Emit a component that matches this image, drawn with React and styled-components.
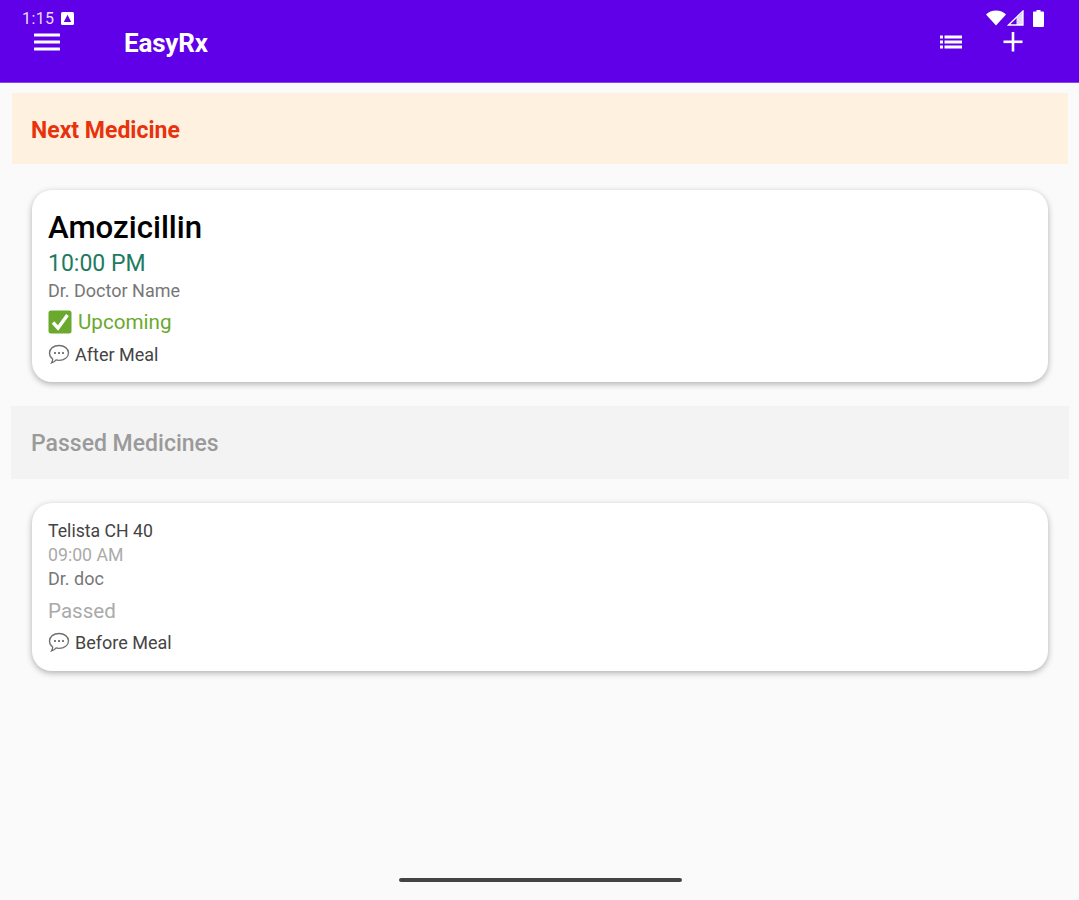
import React from 'react'
import styled, { createGlobalStyle } from 'styled-components'

const GlobalStyle = createGlobalStyle`
  html, body {
    margin: 0;
    padding: 0;
    height: 100%;
    background: #fafafa;
    font-family: Roboto, "Liberation Sans", sans-serif;
  }
  #root {
    height: 100%;
  }
`

function MenuGlyph() {
  return (
    <svg width="26" height="18" viewBox="0 0 26 18" fill="#fff">
      <rect x="0" y="0.5" width="26" height="3" rx="0.5" />
      <rect x="0" y="7.5" width="26" height="3" rx="0.5" />
      <rect x="0" y="14.5" width="26" height="3" rx="0.5" />
    </svg>
  )
}

function ListGlyph() {
  return (
    <svg width="22" height="14" viewBox="0 0 22 14" fill="#fff">
      <rect x="0" y="0.5" width="3" height="3" />
      <rect x="0" y="5.5" width="3" height="3" />
      <rect x="0" y="10.5" width="3" height="3" />
      <rect x="4.5" y="0.5" width="17.5" height="3" />
      <rect x="4.5" y="5.5" width="17.5" height="3" />
      <rect x="4.5" y="10.5" width="17.5" height="3" />
    </svg>
  )
}

function PlusGlyph() {
  return (
    <svg width="20" height="20" viewBox="0 0 20 20" fill="#fff">
      <rect x="0.5" y="8.5" width="19" height="2.6" />
      <rect x="8.7" y="0" width="2.6" height="19.5" />
    </svg>
  )
}

function ChatGlyph() {
  return (
    <svg width="22" height="21" viewBox="0 0 22 21" fill="none">
      <path
        d="M11 1.500c5.400 0 9.500 3.200 9.500 7.400s-4.100 7.400-9.500 7.400c-1 0-2-.1-2.900-.4-1.200 1.500-2.800 2.500-4.600 3 .8-1.200 1.200-2.400 1.200-3.900C2.900 13.700 1.500 11.500 1.500 8.900 1.500 4.700 5.600 1.500 11 1.500z"
        fill="#fff"
        stroke="#6f6f6f"
        strokeWidth="1.300"
      />
      <circle cx="7" cy="9" r="1" fill="#555" />
      <circle cx="11" cy="9" r="1" fill="#555" />
      <circle cx="15" cy="9" r="1" fill="#555" />
    </svg>
  )
}

function CheckGlyph() {
  return (
    <svg width="24" height="24" viewBox="0 0 24 24">
      <rect x="0.500" y="0.500" width="23" height="23" rx="2.500" fill="#6aa92e" />
      <path d="M5 12.500l5 5.500L19.500 5" fill="none" stroke="#fff" strokeWidth="3.400" />
    </svg>
  )
}

function WifiGlyph() {
  return (
    <svg width="20" height="16" viewBox="0 0 20 16" fill="#fff">
      <path d="M0 4.500C2.700 2 6 .5 10 .5s7.300 1.500 10 4L10 15.500z" />
    </svg>
  )
}

function SignalGlyph() {
  return (
    <svg width="17" height="16" viewBox="0 0 17 16" fill="none">
      <path d="M1.500 15L16 1v14z" stroke="#fff" strokeWidth="1.300" />
      <path d="M9.500 15V8L16 2v13z" fill="#fff" opacity="0.85" />
    </svg>
  )
}

function BatteryGlyph() {
  return (
    <svg width="11" height="17" viewBox="0 0 11 17" fill="#fff">
      <path d="M3.500 0h4v1.500H10a1 1 0 0 1 1 1V16a1 1 0 0 1-1 1H1a1 1 0 0 1-1-1V2.500a1 1 0 0 1 1-1h2.500z" />
    </svg>
  )
}

function AlertGlyph() {
  return (
    <svg width="13" height="13" viewBox="0 0 13 13">
      <rect width="13" height="13" rx="1.500" fill="#fff" />
      <path d="M6.500 2.800L10.200 10H2.800z" fill="#5f00e8" />
    </svg>
  )
}

function App() {
  return (
    <Screen>
      <GlobalStyle />
      <Header>
        <StatusBar>
          <StatusLeft>
            <Clock>1:15</Clock>
            <AlertGlyph />
          </StatusLeft>
          <StatusRight>
            <WifiGlyph />
            <SignalGlyph />
            <BatterySlot>
              <BatteryGlyph />
            </BatterySlot>
          </StatusRight>
        </StatusBar>
        <Toolbar>
          <NavButton>
            <MenuGlyph />
          </NavButton>
          <AppTitle>EasyRx</AppTitle>
          <Actions>
            <ListGlyph />
            <PlusGlyph />
          </Actions>
        </Toolbar>
      </Header>

      <Content>
        <SectionBar tone="next">
          <SectionTitle tone="next">Next Medicine</SectionTitle>
        </SectionBar>
        <Card large>
          <DrugName large>Amozicillin</DrugName>
          <DoseTime large>10:00 PM</DoseTime>
          <DoctorName large>Dr. Doctor Name</DoctorName>
          <StatusRow large>
            <CheckGlyph />
            <StatusLabel upcoming>Upcoming</StatusLabel>
          </StatusRow>
          <NoteRow large>
            <ChatGlyph />
            <NoteText>After Meal</NoteText>
          </NoteRow>
        </Card>

        <SectionBar tone="passed">
          <SectionTitle tone="passed">Passed Medicines</SectionTitle>
        </SectionBar>
        <Card>
          <DrugName>Telista CH 40</DrugName>
          <DoseTime>09:00 AM</DoseTime>
          <DoctorName>Dr. doc</DoctorName>
          <StatusRow>
            <StatusLabel>Passed</StatusLabel>
          </StatusRow>
          <NoteRow>
            <ChatGlyph />
            <NoteText>Before Meal</NoteText>
          </NoteRow>
        </Card>
      </Content>

      <HomeBar />
    </Screen>
  )
}

export default App

const Screen = styled.div`
  position: relative;
  width: 1079px;
  height: 900px;
  overflow: hidden;
  background: #fafafa;
`

const Header = styled.header`
  height: 83px;
  background: #5f00e8;
  box-sizing: border-box;
  border-bottom: 1px solid #8a45f2;
  padding: 9px 30px 0 22px;
`

const StatusBar = styled.div`
  display: flex;
  justify-content: space-between;
  align-items: center;
  height: 18px;
`

const StatusLeft = styled.div`
  display: flex;
  align-items: center;
  gap: 7px;
`

const Clock = styled.span`
  font-size: 16px;
  letter-spacing: 0.4px;
  color: #e8dcfc;
`

const StatusRight = styled.div`
  display: flex;
  align-items: center;
  gap: 1px;
  margin-right: 5px;
  margin-top: 0;
`

const BatterySlot = styled.div`
  display: flex;
  margin-left: 8px;
`

const Toolbar = styled.div`
  display: flex;
  align-items: center;
  height: 30px;
`

const NavButton = styled.div`
  display: flex;
  padding-left: 12px;
  width: 90px;
`

const AppTitle = styled.div`
  flex: 1;
  color: #fff;
  font-size: 26px;
  font-weight: 700;
  letter-spacing: -0.2px;
  padding-top: 2px;
`

const Actions = styled.div`
  display: flex;
  align-items: center;
  gap: 41px;
  margin-right: 26px;
`

const Content = styled.main`
  display: flex;
  flex-direction: column;
  padding: 10px 10px 0 11px;
`

const SectionBar = styled.div`
  display: flex;
  align-items: center;
  height: ${p => (p.tone === 'next' ? '71px' : '73px')};
  margin: ${p => (p.tone === 'next' ? '0 1px' : '0')};
  padding-left: ${p => (p.tone === 'next' ? '19px' : '20px')};
  background: ${p => (p.tone === 'next' ? '#fff1e0' : '#f3f3f3')};
`

const SectionTitle = styled.h2`
  margin: ${p => (p.tone === 'next' ? '3px' : '2px')} 0 0;
  font-size: 23px;
  font-weight: ${p => (p.tone === 'next' ? 700 : 500)};
  color: ${p => (p.tone === 'next' ? '#e8320c' : '#9a9a9a')};
`

const Card = styled.section`
  display: flex;
  flex-direction: column;
  align-items: flex-start;
  box-sizing: border-box;
  height: ${p => (p.large ? '192px' : '168px')};
  margin: ${p => (p.large ? '26px 21px 24px 21px' : '24px 21px 0 21px')};
  padding: ${p => (p.large ? '19px 16px 0' : '16px 16px 0')};
  background: #fff;
  border-radius: 20px;
  box-shadow: 0 2px 6px rgba(0, 0, 0, 0.3);
`

const DrugName = styled.div`
  font-size: ${p => (p.large ? '31.200px' : '17.700px')};
  font-weight: ${p => (p.large ? 500 : 400)};
  line-height: ${p => (p.large ? '38px' : '24px')};
  color: ${p => (p.large ? '#000' : '#444')};
`

const DoseTime = styled.div`
  font-size: ${p => (p.large ? '23px' : '17.700px')};
  line-height: ${p => (p.large ? '34px' : '24px')};
  color: ${p => (p.large ? '#1f7a62' : '#aaa')};
`

const DoctorName = styled.div`
  font-size: 18px;
  line-height: ${p => (p.large ? '20px' : '24px')};
  color: #777;
`

const StatusRow = styled.div`
  display: flex;
  align-items: center;
  gap: 6px;
  height: ${p => (p.large ? '41px' : '40px')};
`

const StatusLabel = styled.span`
  font-size: 20.600px;
  color: ${p => (p.upcoming ? '#6aa92e' : '#aaa')};
`

const NoteRow = styled.div`
  display: flex;
  align-items: center;
  gap: 5px;
  height: 24px;
  margin-top: ${p => (p.large ? '0' : '-1px')};
`

const NoteText = styled.span`
  font-size: 18px;
  color: #444;
`

const HomeBar = styled.div`
  position: absolute;
  left: 399px;
  top: 878px;
  width: 283px;
  height: 4px;
  border-radius: 2px;
  background: #444;
`
